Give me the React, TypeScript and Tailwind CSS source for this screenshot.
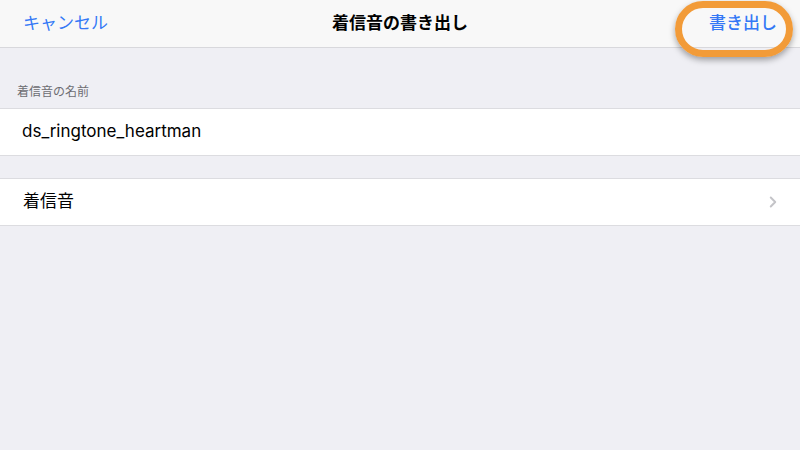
import { ChevronRight } from 'lucide-react'

const font = { fontFamily: '"Inter", "Noto Sans CJK JP", sans-serif' }

export default function App() {
  return (
    <div className="w-[800px] h-[450px] bg-[#efeff4] overflow-hidden" style={font}>
      <div className="relative h-12 bg-[#f8f8f8] border-b border-[#d8d8dc] flex items-center justify-between px-[23px]">
        <span className="text-[17px] text-[#3478f6]">キャンセル</span>
        <span className="absolute left-1/2 -translate-x-1/2 text-[17px] font-semibold text-black">着信音の書き出し</span>
        <span className="text-[17px] text-[#3478f6] font-medium">書き出し</span>
        <div className="absolute left-[675px] top-[1px] w-[118px] h-[56px] rounded-full border-[7px] border-[#f29b38] shadow-[0_3px_6px_rgba(0,0,0,0.35)]" />
      </div>

      <div className="pt-[35px] pb-[7px] px-[17px] text-[12px] text-[#6d6d72]">着信音の名前</div>
      <div className="h-12 bg-white border-y border-[#dcdce0] flex items-center px-[22px] text-[17px] text-black">
        ds_ringtone_heartman
      </div>

      <div className="h-[22px]" />
      <div className="h-12 bg-white border-y border-[#dcdce0] flex items-center justify-between pl-[23px] pr-[18px] text-[17px] text-black">
        <span>着信音</span>
        <ChevronRight className="w-[18px] h-[18px] text-[#c4c4c8]" strokeWidth={2.6} />
      </div>
    </div>
  )
}
